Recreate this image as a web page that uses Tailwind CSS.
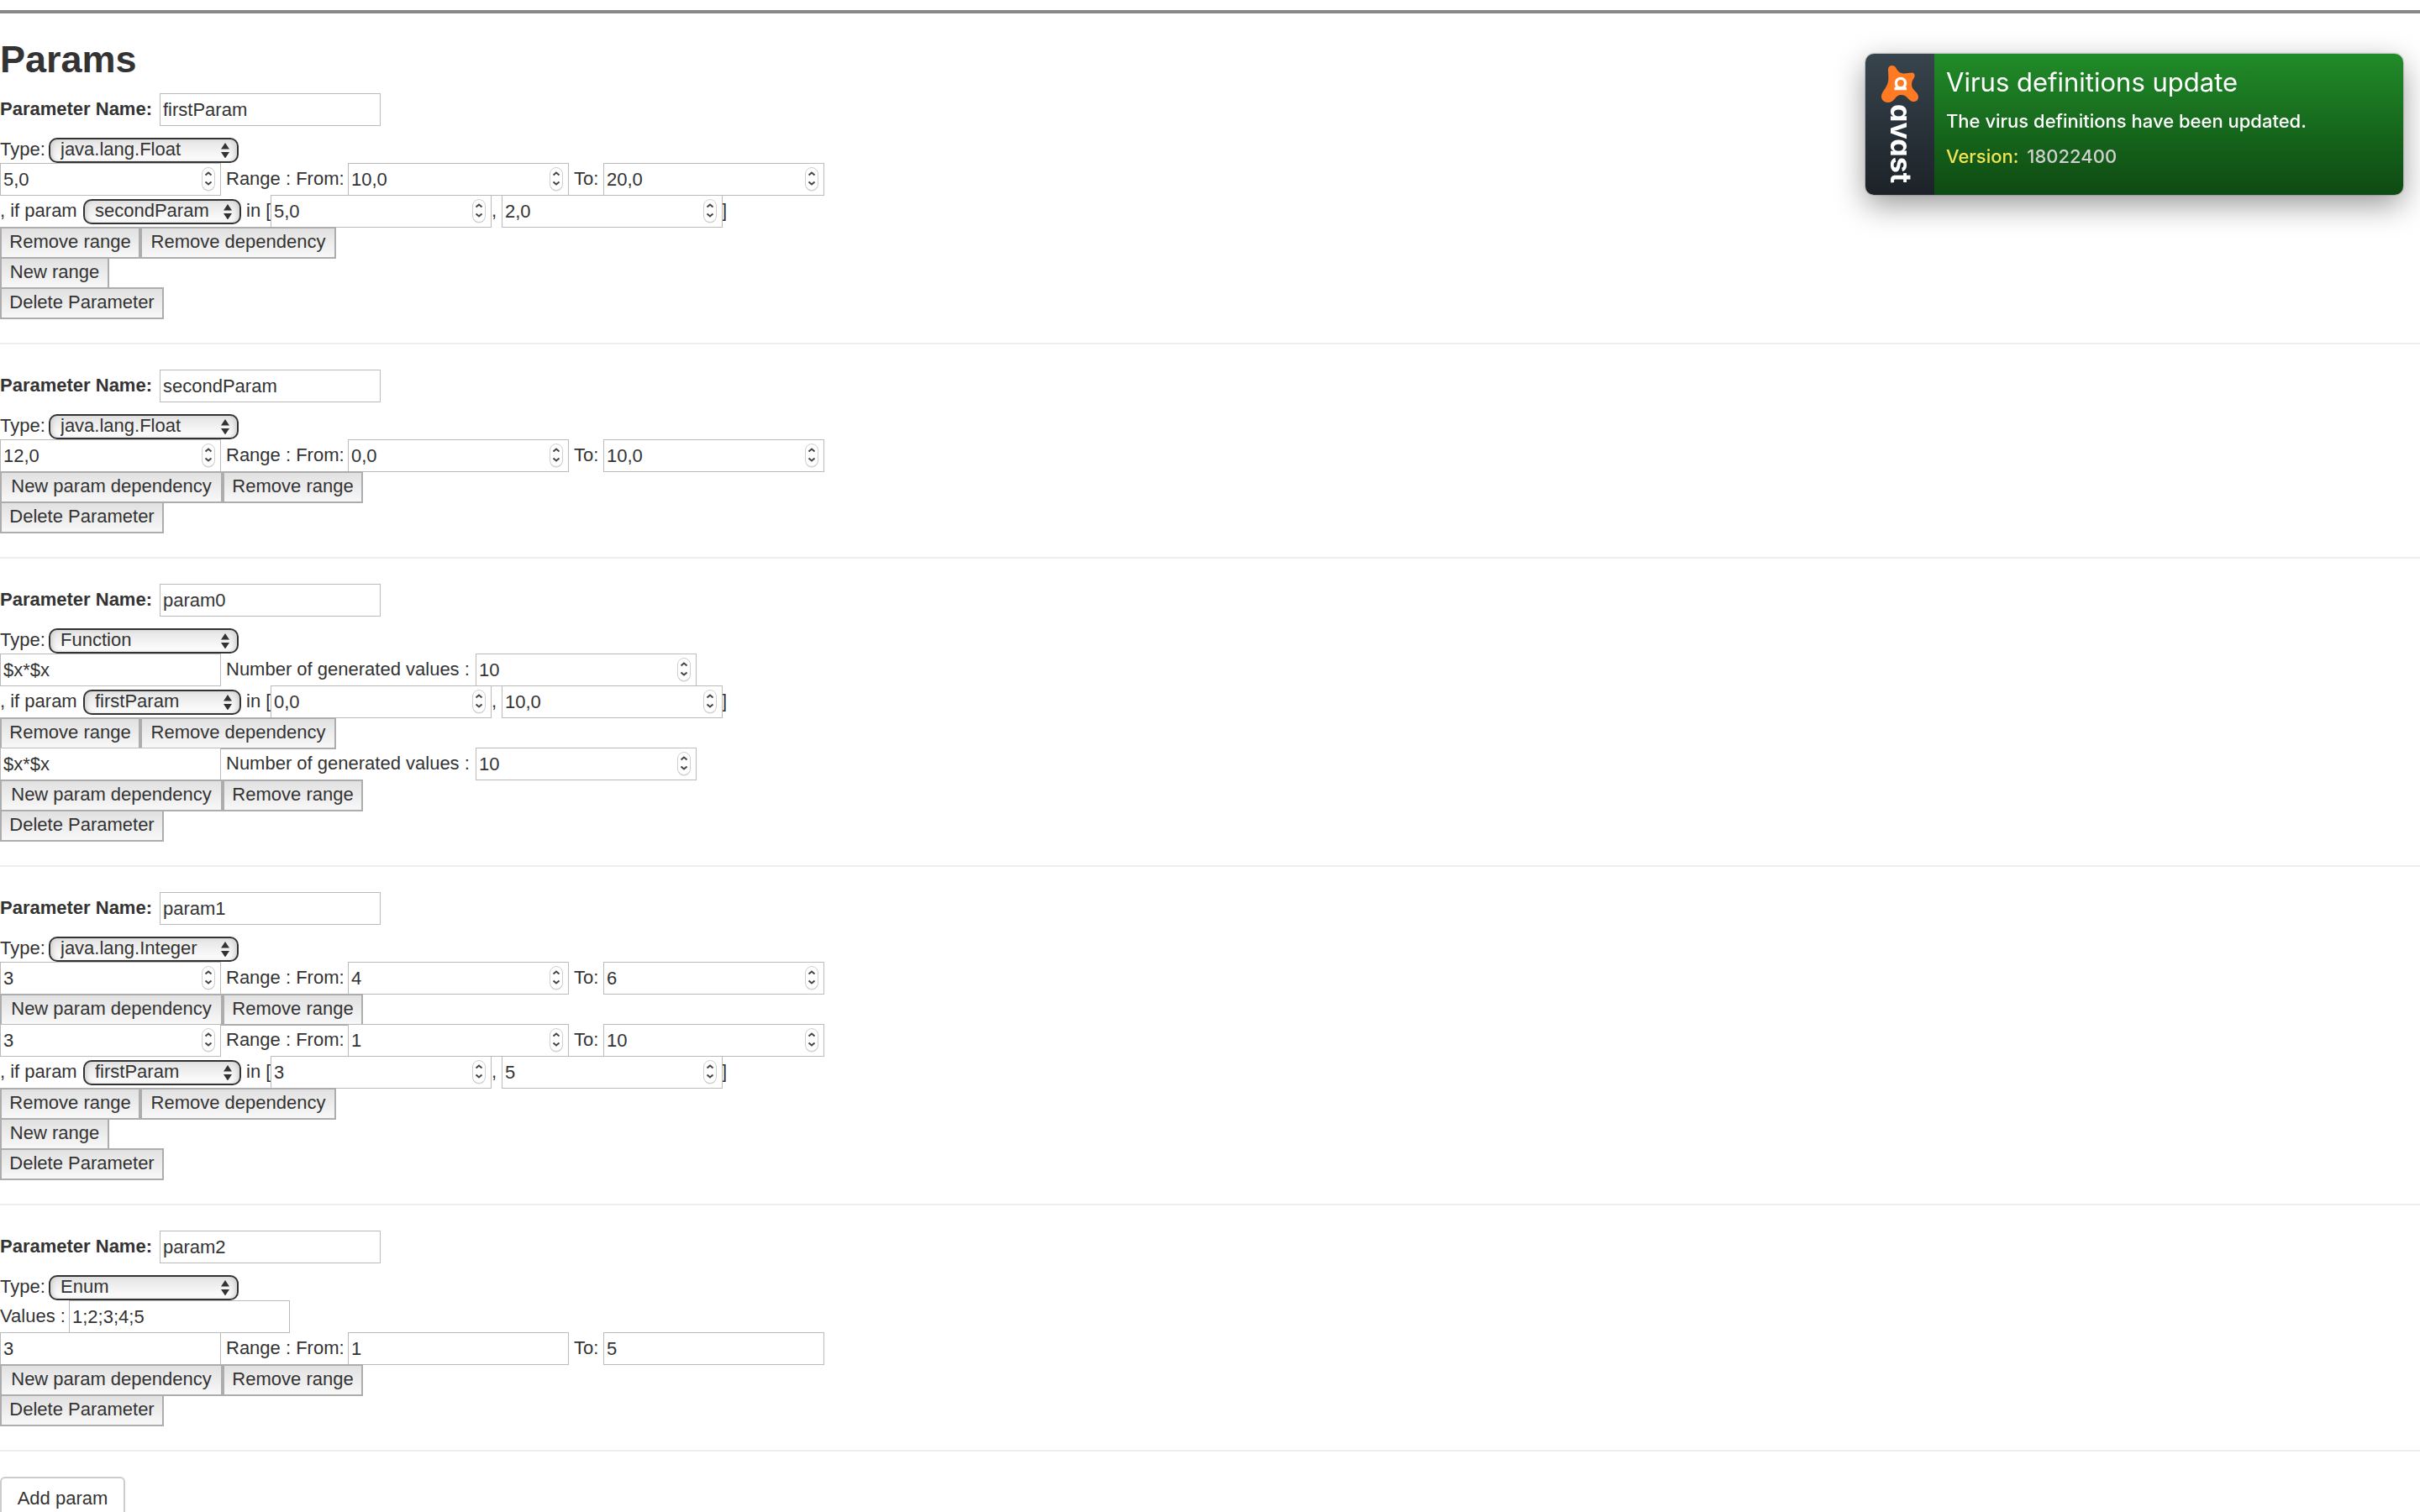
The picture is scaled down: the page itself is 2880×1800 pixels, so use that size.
<!DOCTYPE html>
<html lang="en">
<head>
<meta charset="utf-8">
<meta name="viewport" content="width=device-width, initial-scale=1">
<title>Params</title>
<script src="https://cdn.jsdelivr.net/npm/@tailwindcss/browser@4"></script>
</head>
<body class="bg-white font-['Liberation_Sans',Arial,sans-serif] text-[22px] leading-7 text-[#333]">
<main class="pt-3">
  <hr class="border-0 h-1 bg-[#888]">
  <h1 class="pt-7 pb-3.5 text-[45px] leading-[53px] font-bold">Params</h1>
  <div id="params"></div>
  <button type="button" class="block h-[54px] w-[149px] rounded-md border-2 border-[#ccc] bg-white pb-0.5 text-center">Add param</button>
</main>

<aside role="status" class="fixed top-16 right-5 flex h-[168px] w-[640px] overflow-hidden rounded-[10px] shadow-[0_0_2px_rgba(0,0,0,0.5),0_12px_36px_rgba(0,0,0,0.4)] font-[Inter,sans-serif] text-white">
  <div class="flex w-[82px] shrink-0 flex-col items-center bg-linear-to-b from-[#38444d] to-[#1c2228] pt-3.5">
    <svg class="h-11 w-11 shrink-0" viewBox="0 0 44 44" aria-hidden="true">
      <path fill="#ff7a22" d="M12.700 0c2.600 0 4 1.500 5 3.500 2 3.800 5 6 9.500 6 3.500 0 5.500-1 8.800-1 2.600 0 4 2 3.600 4.300-.4 2.200-2.600 4.200-3.300 7.200-.9 4 .3 7.200 3.200 10 2.800 2.500 4.500 4.500 4.500 7.500 0 3.300-2.500 5.500-5.600 5.500-3 0-5-1.700-6.900-4-2.200-2.800-4.500-4-8-4s-5.300 1.500-7.500 4.500c-2 2.700-4.500 4.500-8.300 4.500C3.300 44 0 41 0 37c0-4 2.500-6.500 5-10.500 3-4.800 3.700-8.500 3.300-14.500C8.200 8.500 8 6.500 8 4.500 8 2 10 0 12.700 0z"/>
      <g fill="none" stroke="#fff" stroke-width="3.400"><circle cx="23" cy="21" r="5.600"/><path d="M15.500 27.500H30"/></g>
    </svg>
    <span class="mt-0.5 ml-0.5 text-[34px] leading-10 font-bold [writing-mode:vertical-rl] [font-feature-settings:'cv11']">avast</span>
  </div>
  <div class="flex grow flex-col bg-linear-to-b from-[#218c29] to-[#0e4a12] pl-3.5 pt-3.5">
    <h2 class="text-[31px] leading-10">Virus definitions update</h2>
    <p class="mt-1.5 text-[22px] leading-10 font-medium">The virus definitions have been updated.</p>
    <p class="mt-0.5 text-[22px] leading-10 font-medium"><span class="text-[#f0e456]">Version:</span> <span class="pl-1 text-[#d0d0d0]">18022400</span></p>
  </div>
</aside>

<script>
const params = [
  { name: 'firstParam', type: 'java.lang.Float', rows: [
    { kind: 'range', v: ['5,0', '10,0', '20,0'], spin: true },
    { kind: 'dep', param: 'secondParam', v: ['5,0', '2,0'] },
    { kind: 'buttons', b: ['Remove range', 'Remove dependency'] },
    { kind: 'buttons', b: ['New range'] } ] },
  { name: 'secondParam', type: 'java.lang.Float', rows: [
    { kind: 'range', v: ['12,0', '0,0', '10,0'], spin: true },
    { kind: 'buttons', b: ['New param dependency', 'Remove range'] } ] },
  { name: 'param0', type: 'Function', rows: [
    { kind: 'func', v: ['$x*$x', '10'] },
    { kind: 'dep', param: 'firstParam', v: ['0,0', '10,0'] },
    { kind: 'buttons', b: ['Remove range', 'Remove dependency'] },
    { kind: 'func', v: ['$x*$x', '10'] },
    { kind: 'buttons', b: ['New param dependency', 'Remove range'] } ] },
  { name: 'param1', type: 'java.lang.Integer', rows: [
    { kind: 'range', v: ['3', '4', '6'], spin: true },
    { kind: 'buttons', b: ['New param dependency', 'Remove range'] },
    { kind: 'range', v: ['3', '1', '10'], spin: true },
    { kind: 'dep', param: 'firstParam', v: ['3', '5'] },
    { kind: 'buttons', b: ['Remove range', 'Remove dependency'] },
    { kind: 'buttons', b: ['New range'] } ] },
  { name: 'param2', type: 'Enum', rows: [
    { kind: 'values', v: ['1;2;3;4;5'] },
    { kind: 'range', v: ['3', '1', '5'], spin: false },
    { kind: 'buttons', b: ['New param dependency', 'Remove range'] } ] },
];
const types = ['java.lang.Float', 'java.lang.Integer', 'Function', 'Enum'];
const buttonWidth = {
  'Remove range': 'w-[167px]', 'Remove dependency': 'w-[233px]',
  'New param dependency': 'w-[265px]', 'New range': 'w-[130px]', 'Delete Parameter': 'w-[195px]',
};
let n = 0;

const label = (id, text, cls) =>
  `<label for="${id}" class="shrink-0 pb-0.5 whitespace-nowrap ${cls}">${text}</label>`;

const spinner = `<svg class="pointer-events-none absolute top-1 right-1.5 h-8 w-[18px]" viewBox="0 0 18 32" fill="none" aria-hidden="true">
  <rect x="1.5" y="2.5" width="15" height="27" rx="7.5" fill="#ccc"/>
  <rect x="1.5" y="1.5" width="15" height="27" rx="7.5" fill="#fff" stroke="#d0d0d0"/>
  <path d="M5.500 10.500 9 7.500l3.500 3M5.500 18.500 9 21.500l3.500-3" stroke="#444" stroke-width="2"/></svg>`;

const field = (id, value, spin, aria = '') =>
  `<span class="relative block w-[263px] shrink-0"><input id="${id}" type="text" ${aria} value="${value}" class="block h-[39px] w-full border border-[#bbb] bg-white px-[3px] font-normal outline-none">${spin ? spinner : ''}</span>`;

const select = (id, options, value, cls) =>
  `<span class="relative shrink-0 ${cls}"><select id="${id}" class="block h-[30px] w-full appearance-none rounded-[10px] border-2 border-[#333] bg-linear-to-b from-[#e4e4e4] to-white px-3 pb-0.5 leading-6 shadow-[inset_5px_0_6px_-3px_#ccc,inset_-5px_0_6px_-3px_#ccc] outline-none">
    ${options.map(o => `<option${o === value ? ' selected' : ''}>${o}</option>`).join('')}</select>
    <svg class="pointer-events-none absolute top-1.5 right-[11px] h-[18px] w-2.5" viewBox="0 0 10 18" fill="#333" aria-hidden="true"><path d="M5 0l5 7.500H0zM5 18.500 0 11h10z"/></svg></span>`;

const button = text =>
  `<button type="button" class="${buttonWidth[text]} h-[38px] shrink-0 border-2 border-[#adadad] bg-linear-to-b from-[#e1e1e1] to-[#f8f8f8] pb-0.5 text-center whitespace-nowrap">${text}</button>`;

const fieldRow = html => `<div class="relative -mb-px flex items-center">${html}</div>`;
const buttonRow = html => `<div class="relative -mb-0.5 flex">${html}</div>`;

function row(r) {
  const id = 'f' + (n++);
  if (r.kind === 'buttons') return buttonRow(r.b.map(button).join(''));
  if (r.kind === 'values') return fieldRow(label(id, 'Values :', 'w-[82px]') + field(id, r.v[0]));
  if (r.kind === 'func') return fieldRow(
    field(id + 'a', r.v[0], false, 'aria-label="Function"') +
    label(id + 'b', 'Number of generated values :', 'w-[303px] pl-1.5') + field(id + 'b', r.v[1], true));
  if (r.kind === 'dep') return fieldRow(
    label(id + 'a', ', if param', 'w-[99px]') + select(id + 'a', ['firstParam', 'secondParam'], r.param, 'w-[188px]') +
    label(id + 'b', 'in [', 'w-[35px] pl-1.5') + field(id + 'b', r.v[0], true) +
    label(id + 'c', ',', 'w-3') + field(id + 'c', r.v[1], true) + '<span class="-ml-px pb-0.5">]</span>');
  return fieldRow(
    field(id + 'a', r.v[0], r.spin, 'aria-label="Default value"') +
    label(id + 'b', 'Range : From:', 'w-[151px] pl-1.5') + field(id + 'b', r.v[1], r.spin) +
    label(id + 'c', 'To:', 'w-[41px] pl-1.5') + field(id + 'c', r.v[2], r.spin));
}

document.getElementById('params').innerHTML = params.map(p => {
  const id = 'p' + (n++);
  return `<section>
    <div class="mb-3.5 flex items-center">${label(id, 'Parameter Name:', 'w-[190px] font-bold')}${field(id, p.name)}</div>
    <div class="flex items-center">${label(id + 't', 'Type:', 'h-[30px] w-[58px]')}${select(id + 't', types, p.type, 'w-[226px]')}</div>
    ${p.rows.map(row).join('')}
    <div class="relative flex">${button('Delete Parameter')}</div>
    <hr class="mt-7 mb-[30px] h-0.5 border-0 bg-[#eee]">
  </section>`;
}).join('');
</script>
</body>
</html>
